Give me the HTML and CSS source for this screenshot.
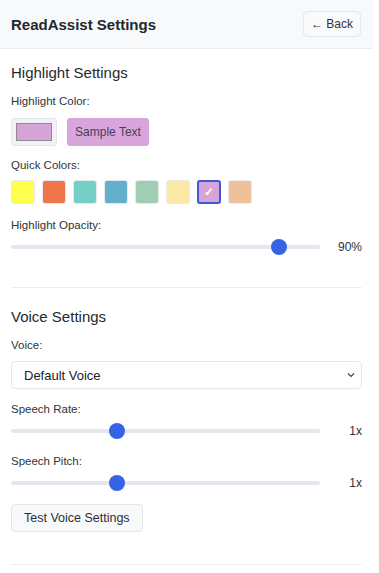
FILE: index.html
```html
<!DOCTYPE html>
<html>
<head>
<meta charset="utf-8">
<link rel="stylesheet" href="styles.css">
</head>
<body>
<div class="page">
  <header class="header">
    <h1 class="title">ReadAssist Settings</h1>
    <button class="back-btn">← Back</button>
  </header>
  <main class="content">
    <section class="section">
      <h2 class="section-title">Highlight Settings</h2>
      <div class="label label-first">Highlight Color:</div>
      <div class="color-row">
        <div class="color-input"><div class="color-swatch"></div></div>
        <div class="sample">Sample Text</div>
      </div>
      <div class="label label-quick">Quick Colors:</div>
      <div class="quick-colors">
        <div class="qc qc-yellow"></div>
        <div class="qc qc-orange"></div>
        <div class="qc qc-teal"></div>
        <div class="qc qc-blue"></div>
        <div class="qc qc-sage"></div>
        <div class="qc qc-cream"></div>
        <div class="qc qc-purple selected">✓</div>
        <div class="qc qc-peach"></div>
      </div>
      <div class="label label-gap">Highlight Opacity:</div>
      <div class="slider-row">
        <input class="range" type="range" min="0.1" max="1" step="0.1" value="0.9">
        <span class="value">90%</span>
      </div>
    </section>
    <section class="section">
      <h2 class="section-title">Voice Settings</h2>
      <div class="label label-first">Voice:</div>
      <div class="select">
        <span>Default Voice</span>
        <svg width="8" height="6" viewBox="0 0 8 6"><path d="M1 1.5 L4 4.5 L7 1.5" fill="none" stroke="#444" stroke-width="1.2"/></svg>
      </div>
      <div class="label label-rate">Speech Rate:</div>
      <div class="slider-row">
        <input class="range" type="range" min="0.5" max="2" step="0.1" value="1">
        <span class="value">1x</span>
      </div>
      <div class="label label-pitch">Speech Pitch:</div>
      <div class="slider-row">
        <input class="range" type="range" min="0.5" max="2" step="0.1" value="1">
        <span class="value">1x</span>
      </div>
      <button class="test-btn">Test Voice Settings</button>
    </section>
  </main>
</div>
</body>
</html>
```

FILE: styles.css
```css
* { box-sizing: border-box; }
html, body { margin: 0; padding: 0; background: #fff; }
body {
  font-family: "Liberation Sans", Arial, sans-serif;
  color: #2b2f36;
  overflow: hidden;
}
.page { width: 373px; }
.header {
  height: 49px;
  background: #f8f9fa;
  border-bottom: 1px solid #eceef1;
  display: flex;
  align-items: center;
  justify-content: space-between;
  padding: 0 12px 0 11px;
}
.title {
  margin: 0;
  font-size: 15px;
  font-weight: 700;
  color: #23272e;
}
.back-btn {
  height: 26px;
  padding: 0 7px;
  background: #f9fafb;
  border: 1px solid #e3e6ea;
  border-radius: 5px;
  font-family: inherit;
  font-size: 12px;
  color: #333;
}
.content { padding: 0 11px; }
.section {
  padding: 15px 0 32px;
  border-bottom: 1px solid #eceef0;
}
.section + .section { padding-top: 20px; }
.section-title {
  margin: 0;
  font-size: 15px;
  line-height: 18px;
  font-weight: 400;
  color: #25292f;
}
.label {
  font-size: 11.5px;
  line-height: 15px;
  color: #2f3339;
}
.label-first { margin-top: 12px; }
.label-quick { margin-top: 12px; }
.label-gap { margin-top: 14px; }
.label-rate { margin-top: 13px; }
.label-pitch { margin-top: 15px; }
.color-row {
  margin-top: 9px;
  display: flex;
  gap: 10px;
}
.color-input {
  width: 46px;
  height: 28px;
  background: #f1f2f4;
  border: 1px solid #e4e6e9;
  border-radius: 3px;
  padding: 4px 4px;
}
.color-swatch {
  width: 100%;
  height: 100%;
  background: #d6a4d8;
  border: 1px solid #8f8a93;
}
.sample {
  width: 82px;
  height: 28px;
  background: #d8a6dc;
  border-radius: 3px;
  display: flex;
  align-items: center;
  justify-content: center;
  font-size: 12px;
  color: #4a3e55;
}
.quick-colors {
  margin-top: 7px;
  display: flex;
  gap: 7px;
}
.qc {
  width: 24px;
  height: 24px;
  border-radius: 3px;
  border: 1px solid #e6e8eb;
  display: flex;
  align-items: center;
  justify-content: center;
  color: #fff;
  font-size: 12px;
  font-weight: 700;
}
.qc-yellow { background: #ffff4d; }
.qc-orange { background: #ef7548; }
.qc-teal { background: #76cfc4; }
.qc-blue { background: #62b0cc; }
.qc-sage { background: #a0cdb4; }
.qc-cream { background: #fce9a8; }
.qc-purple { background: #d6a4d8; }
.qc-peach { background: #f0c098; }
.qc.selected { border: 2px solid #3f57d8; }
.slider-row {
  margin-top: 6px;
  height: 16px;
  display: flex;
  align-items: center;
}
.range {
  -webkit-appearance: none;
  appearance: none;
  margin: 0;
  width: 309px;
  height: 16px;
  background: transparent;
}
.range::-webkit-slider-runnable-track {
  height: 4px;
  background: #e3e7ee;
  border-radius: 2px;
}
.range::-webkit-slider-thumb {
  -webkit-appearance: none;
  width: 16px;
  height: 16px;
  border-radius: 50%;
  background: #3563e6;
  margin-top: -6px;
  border: none;
}
.value {
  flex: 1;
  text-align: right;
  font-size: 12px;
  color: #2f3339;
}
.select {
  margin-top: 8px;
  height: 28px;
  border: 1px solid #e3e6ea;
  border-radius: 4px;
  display: flex;
  align-items: center;
  justify-content: space-between;
  padding: 0 6px 0 12px;
  font-size: 13px;
  color: #222;
}
.test-btn {
  margin-top: 13px;
  height: 28px;
  padding: 0 12px;
  background: #f8f9fa;
  border: 1px solid #e3e6ea;
  border-radius: 4px;
  font-family: inherit;
  font-size: 12.5px;
  color: #2b2f36;
  display: block;
}
```
